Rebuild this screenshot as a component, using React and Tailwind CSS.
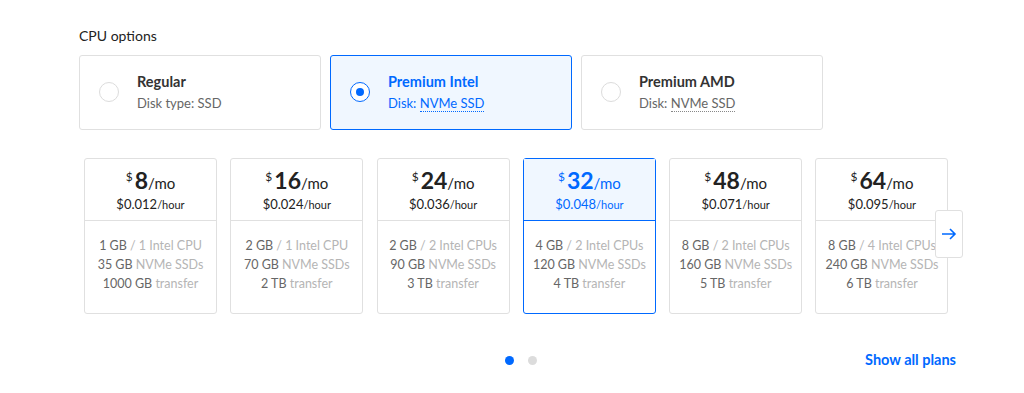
import React from "react";

const cpu = [
  { title: "Regular", label: "Disk type:", val: "SSD", dotted: false, sel: false },
  { title: "Premium Intel", label: "Disk:", val: "NVMe SSD", dotted: true, sel: true },
  { title: "Premium AMD", label: "Disk:", val: "NVMe SSD", dotted: true, sel: false },
];

const plans = [
  { p: "8", h: "$0.012", ram: "1 GB", cpu: "/ 1 Intel CPU", ssd: "35 GB", tr: "1000 GB" },
  { p: "16", h: "$0.024", ram: "2 GB", cpu: "/ 1 Intel CPU", ssd: "70 GB", tr: "2 TB" },
  { p: "24", h: "$0.036", ram: "2 GB", cpu: "/ 2 Intel CPUs", ssd: "90 GB", tr: "3 TB" },
  { p: "32", h: "$0.048", ram: "4 GB", cpu: "/ 2 Intel CPUs", ssd: "120 GB", tr: "4 TB", sel: true },
  { p: "48", h: "$0.071", ram: "8 GB", cpu: "/ 2 Intel CPUs", ssd: "160 GB", tr: "5 TB" },
  { p: "64", h: "$0.095", ram: "8 GB", cpu: "/ 4 Intel CPUs", ssd: "240 GB", tr: "6 TB" },
];

export default function App() {
  return (
    <div className="w-[1024px] h-[393px] bg-white text-[#333] overflow-hidden" style={{ fontFamily: "Lato, 'Open Sans', sans-serif" }}>
      <div className="pl-[79px] pt-[27px]">
        <div className="text-[14px] leading-[18px] text-[#222]">CPU options</div>
        <div className="flex gap-[9px] mt-[10px]">
          {cpu.map((c) => (
            <div
              key={c.title}
              className={
                "w-[242px] h-[75px] rounded-[3px] border flex items-center " +
                (c.sel ? "border-[#0069ff] bg-[#f0f7ff]" : "border-[#e0e0e0] bg-white")
              }
            >
              <div className="w-[56px] flex justify-center pl-[1px] mt-[-1px]">
                {c.sel ? (
                  <div className="w-[20px] h-[20px] rounded-full border-[1.5px] border-[#0069ff] bg-white flex items-center justify-center">
                    <div className="w-[8px] h-[8px] rounded-full bg-[#0069ff]" />
                  </div>
                ) : (
                  <div className="w-[20px] h-[20px] rounded-full border border-[#dcdcdc] bg-white" />
                )}
              </div>
              <div className="pl-[1px] mt-[-1px]">
                <div className={"text-[14.5px] font-bold leading-[18px] " + (c.sel ? "text-[#0069ff]" : "text-[#333]")}>{c.title}</div>
                <div className={"text-[13px] leading-[17px] mt-[4px] " + (c.sel ? "text-[#0069ff]" : "text-[#666]")}>
                  {c.label}{" "}
                  <span className={c.dotted ? "border-b border-dotted " + (c.sel ? "border-[#0069ff]" : "border-[#888]") : ""}>{c.val}</span>
                </div>
              </div>
            </div>
          ))}
        </div>

        <div className="relative pl-[5px] mt-[28px]">
          <div className="flex gap-[13.3px]">
            {plans.map((p) => (
              <div
                key={p.p}
                className={
                  "w-[133px] h-[156px] rounded-[3px] border flex flex-col " +
                  (p.sel ? "border-[#0069ff]" : "border-[#e0e0e0]")
                }
              >
                <div
                  className={
                    "h-[62px] flex flex-col items-center justify-center border-b " +
                    (p.sel ? "bg-[#f0f7ff] border-[#0069ff] text-[#0069ff]" : "border-[#e0e0e0] text-[#222]")
                  }
                >
                  <div className="flex items-baseline leading-none mt-[0px]">
                    <span className="text-[12px] relative top-[-8px] mr-[2px]">$</span>
                    <span className="text-[23px] font-bold">{p.p}</span>
                    <span className="text-[15px]">/mo</span>
                  </div>
                  <div className="leading-none mt-[3px]">
                    <span className="text-[13px]">{p.h}</span>
                    <span className="text-[11px]">/hour</span>
                  </div>
                </div>
                <div className="flex-1 flex flex-col items-center pt-[15px] text-[12.5px] leading-[19px] whitespace-nowrap">
                  <div><span className="text-[#666]">{p.ram}</span> <span className="text-[#b5b5b5]">{p.cpu}</span></div>
                  <div><span className="text-[#666]">{p.ssd}</span> <span className="text-[#b5b5b5]">NVMe SSDs</span></div>
                  <div><span className="text-[#666]">{p.tr}</span> <span className="text-[#b5b5b5]">transfer</span></div>
                </div>
              </div>
            ))}
          </div>
          <button className="absolute left-[856px] top-[52px] w-[28px] h-[48px] bg-white border border-[#e0e0e0] rounded-[3px] flex items-center justify-center">
            <svg width="16" height="12" viewBox="0 0 16 12" fill="none" stroke="#0069ff" strokeWidth="1.6">
              <path d="M1 6h13M9 1l5 5-5 5" />
            </svg>
          </button>
        </div>

        <div className="relative h-[40px] mt-[33px]">
          <div className="absolute left-[426px] top-[9px] flex gap-[14px]">
            <div className="w-[9px] h-[9px] rounded-full bg-[#0069ff]" />
            <div className="w-[9px] h-[9px] rounded-full bg-[#dcdcdc]" />
          </div>
          <div className="absolute right-[68px] top-[2px] text-[14.5px] font-bold text-[#0069ff]">Show all plans</div>
        </div>
      </div>
    </div>
  );
}
